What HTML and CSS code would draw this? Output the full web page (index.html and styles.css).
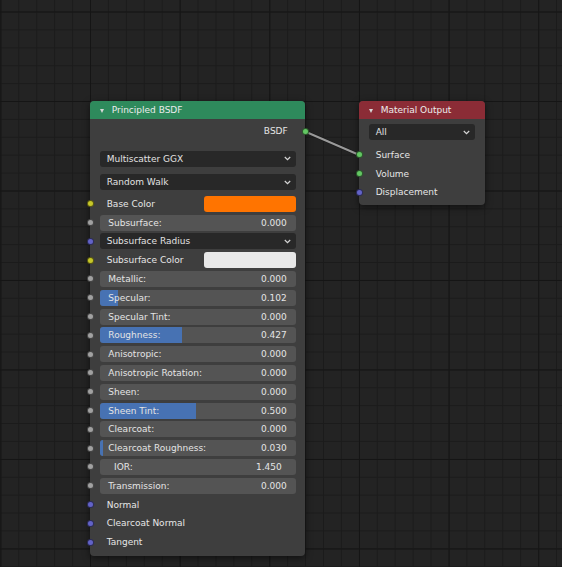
FILE: index.html
```html
<!DOCTYPE html>
<html>
<head>
<meta charset="utf-8">
<link rel="stylesheet" href="styles.css">
</head>
<body>
<div class="canvas">
  <svg class="links" width="562" height="567" viewBox="0 0 562 567">
    <path d="M305 131.5 L359.3 155" stroke="#1a1a1a" stroke-width="3.5" fill="none"/>
    <path d="M305 131.5 L359.3 155" stroke="#9a9a9a" stroke-width="2" fill="none"/>
  </svg>

  <div class="node principled">
    <div class="node-header green"><span class="caret"></span>Principled BSDF</div>
    <div class="node-body">
      <div class="row out"><span class="label">BSDF</span><i class="sock sock-out shader"></i></div>
      <div class="select sel-first"><span>Multiscatter GGX</span><svg class="chev" width="7" height="5" viewBox="0 0 7 5"><path d="M0.8 1 L3.5 3.7 L6.2 1" stroke="#d6d6d6" stroke-width="1.2" fill="none"/></svg></div>
      <div class="select sel-second"><span>Random Walk</span><svg class="chev" width="7" height="5" viewBox="0 0 7 5"><path d="M0.8 1 L3.5 3.7 L6.2 1" stroke="#d6d6d6" stroke-width="1.2" fill="none"/></svg></div>
      <div class="inputs">
        <div class="row"><i class="sock color"></i><span class="label plain">Base Color</span><span class="swatch orange"></span></div>
        <div class="row"><i class="sock float"></i><div class="field"><span>Subsurface:</span><span>0.000</span></div></div>
        <div class="row"><i class="sock vector"></i><div class="select inrow"><span>Subsurface Radius</span><svg class="chev" width="7" height="5" viewBox="0 0 7 5"><path d="M0.8 1 L3.5 3.7 L6.2 1" stroke="#d6d6d6" stroke-width="1.2" fill="none"/></svg></div></div>
        <div class="row"><i class="sock color"></i><span class="label plain">Subsurface Color</span><span class="swatch white"></span></div>
        <div class="row"><i class="sock float"></i><div class="field"><span>Metallic:</span><span>0.000</span></div></div>
        <div class="row"><i class="sock float"></i><div class="field"><b class="fill" style="width:9.2%"></b><span>Specular:</span><span>0.102</span></div></div>
        <div class="row"><i class="sock float"></i><div class="field"><span>Specular Tint:</span><span>0.000</span></div></div>
        <div class="row"><i class="sock float"></i><div class="field"><b class="fill" style="width:41.8%"></b><span>Roughness:</span><span>0.427</span></div></div>
        <div class="row"><i class="sock float"></i><div class="field"><span>Anisotropic:</span><span>0.000</span></div></div>
        <div class="row"><i class="sock float"></i><div class="field"><span>Anisotropic Rotation:</span><span>0.000</span></div></div>
        <div class="row"><i class="sock float"></i><div class="field"><span>Sheen:</span><span>0.000</span></div></div>
        <div class="row"><i class="sock float"></i><div class="field"><b class="fill" style="width:49%"></b><span>Sheen Tint:</span><span>0.500</span></div></div>
        <div class="row"><i class="sock float"></i><div class="field"><span>Clearcoat:</span><span>0.000</span></div></div>
        <div class="row"><i class="sock float"></i><div class="field"><b class="fill" style="width:1.5%"></b><span>Clearcoat Roughness:</span><span>0.030</span></div></div>
        <div class="row"><i class="sock float"></i><div class="field num"><span>IOR:</span><span>1.450</span></div></div>
        <div class="row"><i class="sock float"></i><div class="field"><span>Transmission:</span><span>0.000</span></div></div>
        <div class="row"><i class="sock vector"></i><span class="label plain">Normal</span></div>
        <div class="row"><i class="sock vector"></i><span class="label plain">Clearcoat Normal</span></div>
        <div class="row"><i class="sock vector"></i><span class="label plain">Tangent</span></div>
      </div>
    </div>
  </div>

  <div class="node output">
    <div class="node-header red"><span class="caret"></span>Material Output</div>
    <div class="node-body out-body">
      <div class="select sel-all"><span>All</span><svg class="chev" width="7" height="5" viewBox="0 0 7 5"><path d="M0.8 1 L3.5 3.7 L6.2 1" stroke="#d6d6d6" stroke-width="1.2" fill="none"/></svg></div>
      <div class="inputs out-inputs">
        <div class="row mrow"><i class="sock shader"></i><span class="label plain">Surface</span></div>
        <div class="row mrow"><i class="sock shader"></i><span class="label plain">Volume</span></div>
        <div class="row mrow"><i class="sock vector"></i><span class="label plain">Displacement</span></div>
      </div>
    </div>
  </div>
</div>
</body>
</html>
```
FILE: styles.css
```css
html, body {
  margin: 0;
  padding: 0;
}
body {
  width: 562px;
  height: 567px;
  overflow: hidden;
  font-family: "DejaVu Sans", sans-serif;
  font-size: 9px;
  color: #e6e6e6;
}
.canvas {
  position: relative;
  width: 562px;
  height: 567px;
  background-color: #232323;
  background-image:
    linear-gradient(to right, #151515 0, #151515 1px, transparent 1px),
    linear-gradient(to bottom, #151515 0, #151515 1px, transparent 1px),
    linear-gradient(to right, #1b1b1b 0, #1b1b1b 1px, transparent 1px),
    linear-gradient(to bottom, #1b1b1b 0, #1b1b1b 1px, transparent 1px);
  background-size: 89.66px 89.66px, 89.5px 89.5px, 17.933px 17.933px, 17.9px 17.9px;
  background-position: 90px 0, 0 101px, 90px 0, 0 101px;
  overflow: hidden;
}
.links {
  position: absolute;
  left: 0;
  top: 0;
}
.node {
  position: absolute;
  background: #3e3e3e;
  border-radius: 4px;
  box-shadow: 0 2px 7px rgba(0, 0, 0, 0.55);
}
.principled {
  left: 90px;
  top: 101px;
  width: 215px;
  height: 455px;
}
.output {
  left: 359px;
  top: 101px;
  width: 126px;
  height: 104px;
}
.node-header {
  height: 17.5px;
  display: flex;
  align-items: center;
  padding-left: 21.7px;
  border-radius: 4px 4px 0 0;
  color: #ececec;
  position: relative;
  box-sizing: border-box;
}
.green { background: #2e8a5c; }
.red { background: #8b2c36; }
.caret {
  position: absolute;
  left: 10px;
  top: 7.5px;
  width: 0;
  height: 0;
  border-left: 2.5px solid transparent;
  border-right: 2.5px solid transparent;
  border-top: 4px solid #d8d8d8;
}
.node-body {
  padding: 3.6px 0 4.3px 0;
  display: flex;
  flex-direction: column;
}
.row {
  position: relative;
  height: 18.8px;
  display: flex;
  align-items: center;
  padding: 0 9px 0 10px;
}
.row.out {
  justify-content: flex-end;
  padding-right: 17.3px;
}
.label.plain {
  padding-left: 6.7px;
  flex: 1;
}
.sock {
  position: absolute;
  left: -3.5px;
  top: 50%;
  width: 7px;
  height: 7px;
  margin-top: -3.5px;
  border-radius: 50%;
  box-sizing: border-box;
  border: 1px solid rgba(0, 0, 0, 0.55);
}
.sock-out {
  left: auto;
  right: -3.5px;
}
.shader { background: #63c763; }
.color { background: #c7c729; }
.float { background: #a1a1a1; }
.vector { background: #6363c7; }

.select {
  height: 16px;
  margin: 0 9px 0 10px;
  background: #282828;
  border-radius: 3px;
  display: flex;
  align-items: center;
  justify-content: space-between;
  padding: 0 5px 0 6.7px;
  color: #e2e2e2;
}
.sel-first { margin-top: 10.1px; }
.sel-second { margin-top: 7.3px; margin-bottom: 4.1px; }
.select.inrow {
  flex: 1;
  margin: 0;
}
.sel-all {
  margin: 5.5px 10px 5.6px 10px;
}
.out-body {
  padding: 0;
}
.mrow {
  height: 18.7px;
}
.swatch {
  width: 92px;
  height: 16px;
  border-radius: 3px;
}
.orange { background: #ff7400; }
.white { background: #e8e8e8; }
.field {
  flex: 1;
  position: relative;
  height: 16px;
  background: #545454;
  border-radius: 3px;
  display: flex;
  align-items: center;
  justify-content: space-between;
  padding: 0 9.3px 0 8.3px;
  overflow: hidden;
  color: #e4e4e4;
}
.field span {
  position: relative;
}
.field.num {
  padding: 0 14.3px 0 14px;
}
.fill {
  position: absolute;
  left: 0;
  top: 0;
  bottom: 0;
  background: #4772b3;
}
.chev {
  display: block;
}
```
